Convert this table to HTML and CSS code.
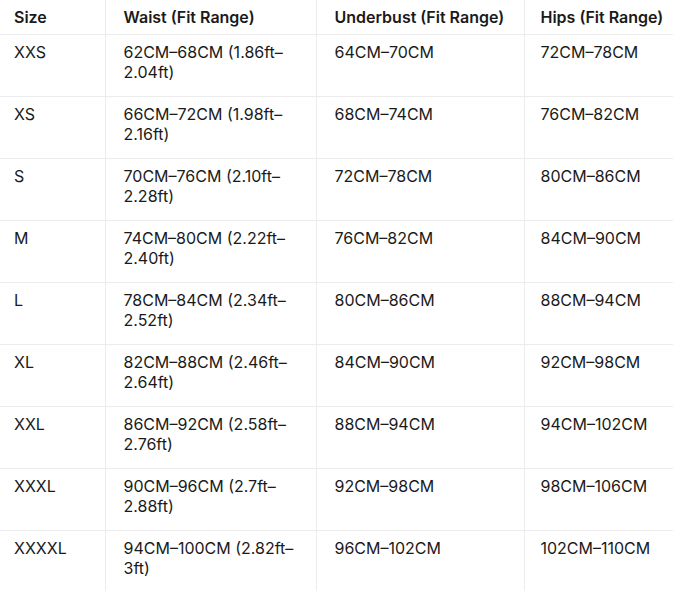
FILE: index.html
```html
<!DOCTYPE html>
<html>
<head>
<meta charset="utf-8">
<link rel="stylesheet" href="styles.css">
</head>
<body>
<table class="size-table">
  <colgroup>
    <col class="c1"><col class="c2"><col class="c3"><col class="c4">
  </colgroup>
  <thead>
    <tr><th>Size</th><th>Waist (Fit Range)</th><th>Underbust (Fit Range)</th><th>Hips (Fit Range)</th></tr>
  </thead>
  <tbody>
    <tr><td>XXS</td><td>62CM–68CM (1.86ft–<br>2.04ft)</td><td>64CM–70CM</td><td>72CM–78CM</td></tr>
    <tr><td>XS</td><td>66CM–72CM (1.98ft–<br>2.16ft)</td><td>68CM–74CM</td><td>76CM–82CM</td></tr>
    <tr><td>S</td><td>70CM–76CM (2.10ft–<br>2.28ft)</td><td>72CM–78CM</td><td>80CM–86CM</td></tr>
    <tr><td>M</td><td>74CM–80CM (2.22ft–<br>2.40ft)</td><td>76CM–82CM</td><td>84CM–90CM</td></tr>
    <tr><td>L</td><td>78CM–84CM (2.34ft–<br>2.52ft)</td><td>80CM–86CM</td><td>88CM–94CM</td></tr>
    <tr><td>XL</td><td>82CM–88CM (2.46ft–<br>2.64ft)</td><td>84CM–90CM</td><td>92CM–98CM</td></tr>
    <tr><td>XXL</td><td>86CM–92CM (2.58ft–<br>2.76ft)</td><td>88CM–94CM</td><td>94CM–102CM</td></tr>
    <tr><td>XXXL</td><td>90CM–96CM (2.7ft–<br>2.88ft)</td><td>92CM–98CM</td><td>98CM–106CM</td></tr>
    <tr><td>XXXXL</td><td>94CM–100CM (2.82ft–<br>3ft)</td><td>96CM–102CM</td><td>102CM–110CM</td></tr>
  </tbody>
</table>
</body>
</html>
```

FILE: styles.css
```css
html, body {
  margin: 0;
  padding: 0;
  background: #ffffff;
}
body {
  font-family: Inter, "Noto Sans", "Liberation Sans", sans-serif;
  font-size: 16px;
  line-height: 20px;
  color: #1a1a1a;
  overflow: hidden;
}
.size-table {
  border-collapse: collapse;
  table-layout: fixed;
  width: 673px;
}
.c1 { width: 105px; }
.c2 { width: 211px; }
.c3 { width: 208px; }
.c4 { width: 149px; }
.size-table th,
.size-table td {
  text-align: left;
  vertical-align: top;
  padding: 7px 0 0 18px;
  border-left: 1px solid #ececec;
  border-bottom: 1px solid #ececec;
  white-space: nowrap;
  box-sizing: border-box;
}
.size-table th:first-child,
.size-table td:first-child {
  padding-left: 14px;
  border-left: none;
}
.size-table th:last-child,
.size-table td:last-child {
  padding-left: 16px;
}
.size-table th {
  font-weight: 600;
  height: 34px;
}
.size-table td {
  height: 62px;
}
```
